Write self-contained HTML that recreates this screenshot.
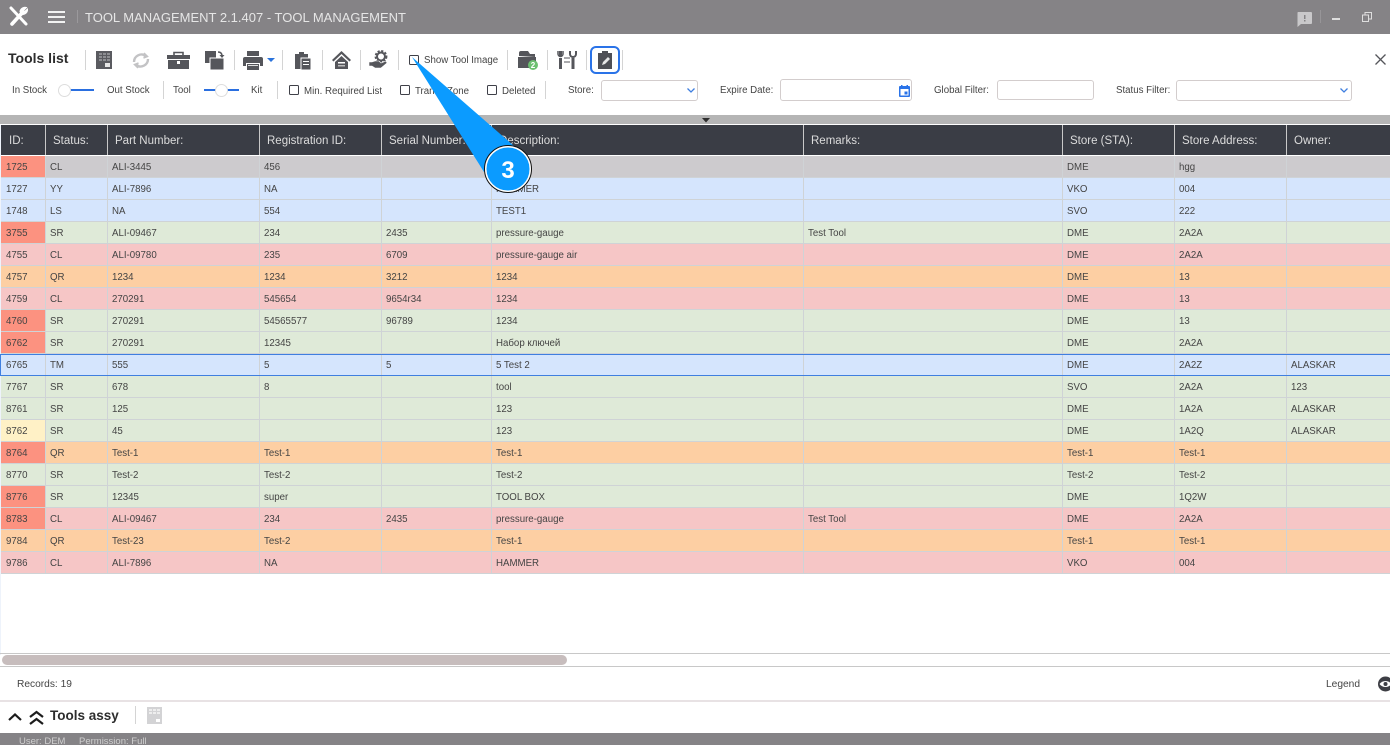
<!DOCTYPE html>
<html><head><meta charset="utf-8"><style>
*{box-sizing:border-box}
html,body{margin:0;padding:0;width:1390px;height:745px;overflow:hidden;background:#fff;font-family:"Liberation Sans","Noto Sans CJK SC",sans-serif;color:#3d3d3d}
.a{position:absolute;white-space:nowrap}
.l{position:absolute;white-space:nowrap;font-size:9.7px;line-height:12px;color:#444}
.sep{position:absolute;width:1px;background:#d4d4d4}
.cb{position:absolute;width:10px;height:10px;border:1px solid #3f4048;border-radius:1.5px;background:#fff}
.inp{position:absolute;background:#fff;border:1px solid #d3cdcd;border-radius:3px}
#hd{position:absolute;left:1px;top:125px;width:1389px;height:30px;background:#3a3d45;display:flex}
#hd div{height:30px;line-height:33px;font-size:11.5px;color:#dcdcdc;padding-left:7px;border-right:1px solid #c9c9c9;white-space:nowrap;overflow:hidden}
.r{position:absolute;left:1px;width:1389px;height:22px;display:flex;font-size:9.7px;line-height:24px;color:#444;border-bottom:1px solid #cfd3d6}
.r span{display:block;height:21px;padding-left:4px;border-right:1px solid #cfd3d6;white-space:nowrap;overflow:hidden}
.r span.c1{padding-left:5px}
.c1{width:45px}.c2{width:62px}.c3{width:152px}.c4{width:122px}.c5{width:110px}.c6{width:312px}.c7{width:259px}.c8{width:112px}.c9{width:112px}.c10{width:103px;border-right:0!important}
.g{background:#cdcbce}.b{background:#d5e5fd}.n{background:#dfead8}.p{background:#f6c6c6}.o{background:#fdcfa3}
.x{background:#fc9280}.y{background:#fff1c6}
.r.sel{border-top:1px solid #3f7fe0;border-bottom:1px solid #3f7fe0;height:22px;line-height:22px;z-index:2;left:0;width:1390px;border-left:1px solid #3f7fe0}
.r.sel span{height:20px}
svg{position:absolute;overflow:visible}
</style></head><body>

<div class="a" style="left:0;top:0;width:1390px;height:34px;background:#858386"></div>
<svg style="left:9px;top:6px" width="20" height="21" viewBox="0 0 20 21" fill="none" stroke="#fff"><path d="M2 2l15 16" stroke-width="3" stroke-linecap="round"/><path d="M3 18L13 7" stroke-width="3.600" stroke-linecap="round"/><path d="M17.500 1.500l-3 3 1 1 3-2.500a5 5 0 0 1-6 5.500l-1.500-3a5 5 0 0 1 6.500-4z" fill="#fff" stroke-width="1"/></svg>
<div class="a" style="left:48px;top:11px;width:17px;height:2px;background:#f2f2f2"></div>
<div class="a" style="left:48px;top:16px;width:17px;height:2px;background:#f2f2f2"></div>
<div class="a" style="left:48px;top:21px;width:17px;height:2px;background:#f2f2f2"></div>
<div class="a" style="left:77px;top:10px;width:1px;height:13px;background:#9b999c"></div>
<div class="a" style="left:85px;top:10px;font-size:13px;line-height:16px;color:#e6e6e6">TOOL MANAGEMENT 2.1.407 - TOOL MANAGEMENT</div>
<svg style="left:1297px;top:12px" width="15" height="15" viewBox="0 0 15 15"><path d="M1 0h13a1 1 0 0 1 1 1v10a1 1 0 0 1-1 1H4l-3.500 3V1a1 1 0 0 1 .5-1z" fill="#c9c8ca"/><rect x="7" y="3" width="1.500" height="4" fill="#858386"/><rect x="7" y="8" width="1.500" height="1.500" fill="#858386"/></svg>
<div class="a" style="left:1320px;top:10px;width:1px;height:13px;background:#979598"></div>
<div class="a" style="left:1332px;top:18px;width:8px;height:2px;background:#dedede"></div>
<svg style="left:1362px;top:12px" width="10" height="10" viewBox="0 0 10 10" fill="none" stroke="#dedede"><rect x=".5" y="3" width="6" height="6.500"/><path d="M3 3V.5h6.500V7H6.500"/></svg>

<div class="a" style="left:8px;top:50px;font-size:14px;line-height:17px;font-weight:bold;color:#2d2d2d">Tools list</div>
<div class="sep" style="left:85px;top:50px;height:20px"></div>
<svg style="left:96px;top:51px" width="17" height="18"><rect width="16" height="18" fill="#5a5b60"/><g fill="#8d8e92"><rect x="3" y="2" width="3" height="2"/><rect x="7" y="2" width="3" height="2"/><rect x="11" y="2" width="3" height="2"/><rect x="3" y="5" width="3" height="2"/><rect x="7" y="5" width="3" height="2"/><rect x="11" y="5" width="3" height="2"/><rect x="3" y="8" width="3" height="2"/><rect x="7" y="8" width="3" height="2"/><rect x="11" y="8" width="3" height="2"/></g><rect x="9" y="12" width="5" height="4" fill="#e6e6e6"/></svg>
<svg style="left:131px;top:51px" width="20" height="19" viewBox="0 0 20 19" fill="none" stroke="#c3c3c5" stroke-width="2.400"><path d="M3 11a7.500 7.500 0 0 1 12-6"/><path d="M17 8a7.500 7.500 0 0 1-12 6"/><path d="M13 2l3.500 3.500-4 1.500" stroke-width="1.500" fill="#c3c3c5"/><path d="M7 17l-3.500-3.500 4-1.500" stroke-width="1.500" fill="#c3c3c5"/></svg>
<svg style="left:167px;top:51px" width="23" height="18"><path d="M7 4V1.500h9V4" fill="none" stroke="#55565b" stroke-width="1.600"/><rect y="4" width="23" height="4" fill="#55565b"/><rect x="1" y="9" width="21" height="9" fill="#55565b"/><rect x="10" y="10" width="3" height="3" fill="#fff"/></svg>
<svg style="left:205px;top:51px" width="19" height="19"><rect width="11" height="12" fill="#55565b"/><rect x="5" y="7" width="14" height="12" fill="#55565b" stroke="#fff"/><path d="M13 1c3 0 4 1.500 4 4" fill="none" stroke="#55565b" stroke-width="1.500"/><path d="M14.500 4h5l-2.500 3z" fill="#55565b"/></svg>
<div class="sep" style="left:234px;top:50px;height:20px"></div>
<svg style="left:243px;top:51px" width="20" height="19"><rect x="4" y="0" width="12" height="5" fill="#55565b"/><path d="M2 6h16a2 2 0 0 1 2 2v7h-3v-3H3v3H0V8a2 2 0 0 1 2-2z" fill="#55565b"/><rect x="4" y="13" width="12" height="6" fill="#55565b"/><rect x="5" y="14" width="10" height="1" fill="#ddd"/></svg>
<svg style="left:267px;top:58px" width="8" height="5"><path d="M0 0h8l-4 4z" fill="#2a73dc"/></svg>
<div class="sep" style="left:282px;top:50px;height:20px"></div>
<svg style="left:294px;top:51px" width="17" height="19"><path d="M1 3h4V1h5v2h4v15H1z" fill="#55565b"/><rect x="7" y="7" width="10" height="12" fill="#55565b" stroke="#fff"/><rect x="9" y="10" width="6" height="1" fill="#fff"/><rect x="9" y="13" width="6" height="1" fill="#fff"/></svg>
<div class="sep" style="left:322px;top:50px;height:20px"></div>
<svg style="left:332px;top:51px" width="19" height="18"><path d="M9.500 0L19 9l-1.500 1.500-8-7.500-8 7.500L0 9z" fill="#55565b"/><path d="M3 11l6.500-6 6.500 6v7H3z" fill="#55565b"/><rect x="6" y="11" width="7" height="1.500" fill="#fff"/><rect x="6" y="14" width="7" height="1.500" fill="#bbb"/></svg>
<div class="sep" style="left:360px;top:50px;height:20px"></div>
<svg style="left:369px;top:50px" width="19" height="19"><circle cx="12" cy="6.500" r="5.500" fill="none" stroke="#55565b" stroke-width="1.800" stroke-dasharray="2.200 1.500"/><circle cx="12" cy="6.500" r="4" fill="none" stroke="#55565b" stroke-width="2"/><path d="M0 12h3l3-1h4l2 2 5-2 1 2-6 5H6l-3-2H0z" fill="#55565b" stroke="#fff" stroke-width=".6"/></svg>
<div class="sep" style="left:398px;top:50px;height:20px"></div>
<div class="cb" style="left:409px;top:55px"></div>
<div class="l" style="left:424px;top:55px">Show Tool Image</div>
<div class="sep" style="left:507px;top:50px;height:20px"></div>
<svg style="left:518px;top:50px" width="22" height="20"><path d="M1 6V3a2 2 0 0 1 2-2h7l2 3h5v3z" fill="#55565b"/><path d="M0 7h18v11H0z" fill="#55565b"/><circle cx="15" cy="15" r="5" fill="#6cc070"/><text x="15" y="18" font-size="8" font-weight="bold" fill="#fff" text-anchor="middle" font-family="Liberation Sans">2</text></svg>
<div class="sep" style="left:547px;top:50px;height:20px"></div>
<svg style="left:557px;top:50px" width="20" height="20" fill="none" stroke="#55565b"><path d="M3.500 1v5M3.500 8v11" stroke-width="3"/><path d="M1 1v3a2.500 2.500 0 0 0 5 0V1" stroke-width="1.500"/><path d="M16 8v11" stroke-width="3"/><path d="M13 1v3a3 3 0 0 0 6 0V1" stroke-width="2"/><path d="M7 8h6M7 12h6" stroke-width="1"/></svg>
<div class="sep" style="left:586px;top:50px;height:20px"></div>
<div class="a" style="left:590px;top:46px;width:30px;height:28px;border:2px solid #2a73e8;border-radius:6px"></div>
<svg style="left:598px;top:51px" width="14" height="18"><path d="M0 2h4V0h6v2h4v16H0z" fill="#4f5056"/><path d="M4 14l1-3 5-5 2 2-5 5z" fill="#e8e8e8"/></svg>
<div class="sep" style="left:622px;top:50px;height:20px"></div>
<svg style="left:1375px;top:54px" width="11" height="11" fill="none" stroke="#55565b" stroke-width="1.300"><path d="M.5.500l10 10M10.500.500l-10 10"/></svg>

<div class="l" style="left:12px;top:85px">In Stock</div>
<div class="a" style="left:64px;top:89px;width:30px;height:2px;background:#2a6fe0"></div>
<div class="a" style="left:58px;top:84px;width:13px;height:13px;border-radius:50%;background:#fff;border:1px solid #ddd"></div>
<div class="l" style="left:107px;top:85px">Out Stock</div>
<div class="sep" style="left:163px;top:81px;height:18px"></div>
<div class="l" style="left:173px;top:85px">Tool</div>
<div class="a" style="left:204px;top:89px;width:35px;height:2px;background:#2a6fe0"></div>
<div class="a" style="left:215px;top:84px;width:13px;height:13px;border-radius:50%;background:#fff;border:1px solid #ddd"></div>
<div class="l" style="left:251px;top:85px">Kit</div>
<div class="sep" style="left:277px;top:81px;height:18px"></div>
<div class="cb" style="left:289px;top:85px"></div>
<div class="l" style="left:304px;top:86px">Min. Required List</div>
<div class="cb" style="left:400px;top:85px"></div>
<div class="l" style="left:415px;top:86px">Transit Zone</div>
<div class="cb" style="left:487px;top:85px"></div>
<div class="l" style="left:502px;top:86px">Deleted</div>
<div class="sep" style="left:545px;top:81px;height:18px"></div>
<div class="l" style="left:568px;top:85px">Store:</div>
<div class="inp" style="left:601px;top:80px;width:97px;height:21px"></div>
<svg style="left:687px;top:88px" width="8" height="6" fill="none" stroke="#3f7fe0" stroke-width="1.300"><path d="M.5.500l3.500 3.500 3.500-3.500"/></svg>
<div class="l" style="left:720px;top:85px">Expire Date:</div>
<div class="inp" style="left:780px;top:79px;width:132px;height:22px"></div>
<svg style="left:899px;top:85px" width="11" height="12"><rect y="1" width="11" height="11" rx="1" fill="#2a73e8"/><rect x="1.500" y="4" width="8" height="6.500" fill="#fff"/><rect x="5.500" y="6.500" width="3" height="3" fill="#2a73e8"/><rect x="2" width="1.500" height="2" fill="#2a73e8"/><rect x="7.500" width="1.500" height="2" fill="#2a73e8"/></svg>
<div class="l" style="left:934px;top:85px">Global Filter:</div>
<div class="inp" style="left:997px;top:80px;width:97px;height:20px"></div>
<div class="l" style="left:1116px;top:85px">Status Filter:</div>
<div class="inp" style="left:1176px;top:80px;width:176px;height:21px"></div>
<svg style="left:1340px;top:88px" width="8" height="6" fill="none" stroke="#3f7fe0" stroke-width="1.300"><path d="M.5.500l3.500 3.500 3.500-3.500"/></svg>

<div class="a" style="left:0;top:115px;width:1390px;height:9px;background:#b5b5b5"></div>
<svg style="left:702px;top:118px" width="8" height="5"><path d="M0 0h8l-4 4.500z" fill="#2d2d2d"/></svg>
<div class="a" style="left:0;top:125px;width:1px;height:530px;background:#eef3fb"></div>

<div id="hd">
<div style="width:45px;padding-left:8px">ID:</div><div style="width:62px">Status:</div><div style="width:152px">Part Number:</div><div style="width:122px">Registration ID:</div><div style="width:110px">Serial Number:</div><div style="width:312px">Description:</div><div style="width:259px">Remarks:</div><div style="width:112px">Store (STA):</div><div style="width:112px">Store Address:</div><div style="width:103px;border:0">Owner:</div>
</div>

<div class="r g" style="top:156px"><span class="c1 x">1725</span><span class="c2">CL</span><span class="c3">ALI-3445</span><span class="c4">456</span><span class="c5"></span><span class="c6"></span><span class="c7"></span><span class="c8">DME</span><span class="c9">hgg</span><span class="c10"></span></div>
<div class="r b" style="top:178px"><span class="c1">1727</span><span class="c2">YY</span><span class="c3">ALI-7896</span><span class="c4">NA</span><span class="c5"></span><span class="c6">HAMMER</span><span class="c7"></span><span class="c8">VKO</span><span class="c9">004</span><span class="c10"></span></div>
<div class="r b" style="top:200px"><span class="c1">1748</span><span class="c2">LS</span><span class="c3">NA</span><span class="c4">554</span><span class="c5"></span><span class="c6">TEST1</span><span class="c7"></span><span class="c8">SVO</span><span class="c9">222</span><span class="c10"></span></div>
<div class="r n" style="top:222px"><span class="c1 x">3755</span><span class="c2">SR</span><span class="c3">ALI-09467</span><span class="c4">234</span><span class="c5">2435</span><span class="c6">pressure-gauge</span><span class="c7">Test Tool</span><span class="c8">DME</span><span class="c9">2A2A</span><span class="c10"></span></div>
<div class="r p" style="top:244px"><span class="c1">4755</span><span class="c2">CL</span><span class="c3">ALI-09780</span><span class="c4">235</span><span class="c5">6709</span><span class="c6">pressure-gauge air</span><span class="c7"></span><span class="c8">DME</span><span class="c9">2A2A</span><span class="c10"></span></div>
<div class="r o" style="top:266px"><span class="c1">4757</span><span class="c2">QR</span><span class="c3">1234</span><span class="c4">1234</span><span class="c5">3212</span><span class="c6">1234</span><span class="c7"></span><span class="c8">DME</span><span class="c9">13</span><span class="c10"></span></div>
<div class="r p" style="top:288px"><span class="c1">4759</span><span class="c2">CL</span><span class="c3">270291</span><span class="c4">545654</span><span class="c5">9654r34</span><span class="c6">1234</span><span class="c7"></span><span class="c8">DME</span><span class="c9">13</span><span class="c10"></span></div>
<div class="r n" style="top:310px"><span class="c1 x">4760</span><span class="c2">SR</span><span class="c3">270291</span><span class="c4">54565577</span><span class="c5">96789</span><span class="c6">1234</span><span class="c7"></span><span class="c8">DME</span><span class="c9">13</span><span class="c10"></span></div>
<div class="r n" style="top:332px"><span class="c1 x">6762</span><span class="c2">SR</span><span class="c3">270291</span><span class="c4">12345</span><span class="c5"></span><span class="c6">Набор ключей</span><span class="c7"></span><span class="c8">DME</span><span class="c9">2A2A</span><span class="c10"></span></div>
<div class="r b sel" style="top:354px"><span class="c1">6765</span><span class="c2">TM</span><span class="c3">555</span><span class="c4">5</span><span class="c5">5</span><span class="c6">5 Test 2</span><span class="c7"></span><span class="c8">DME</span><span class="c9">2A2Z</span><span class="c10">ALASKAR</span></div>
<div class="r n" style="top:376px"><span class="c1">7767</span><span class="c2">SR</span><span class="c3">678</span><span class="c4">8</span><span class="c5"></span><span class="c6">tool</span><span class="c7"></span><span class="c8">SVO</span><span class="c9">2A2A</span><span class="c10">123</span></div>
<div class="r n" style="top:398px"><span class="c1">8761</span><span class="c2">SR</span><span class="c3">125</span><span class="c4"></span><span class="c5"></span><span class="c6">123</span><span class="c7"></span><span class="c8">DME</span><span class="c9">1A2A</span><span class="c10">ALASKAR</span></div>
<div class="r n" style="top:420px"><span class="c1 y">8762</span><span class="c2">SR</span><span class="c3">45</span><span class="c4"></span><span class="c5"></span><span class="c6">123</span><span class="c7"></span><span class="c8">DME</span><span class="c9">1A2Q</span><span class="c10">ALASKAR</span></div>
<div class="r o" style="top:442px"><span class="c1 x">8764</span><span class="c2">QR</span><span class="c3">Test-1</span><span class="c4">Test-1</span><span class="c5"></span><span class="c6">Test-1</span><span class="c7"></span><span class="c8">Test-1</span><span class="c9">Test-1</span><span class="c10"></span></div>
<div class="r n" style="top:464px"><span class="c1">8770</span><span class="c2">SR</span><span class="c3">Test-2</span><span class="c4">Test-2</span><span class="c5"></span><span class="c6">Test-2</span><span class="c7"></span><span class="c8">Test-2</span><span class="c9">Test-2</span><span class="c10"></span></div>
<div class="r n" style="top:486px"><span class="c1 x">8776</span><span class="c2">SR</span><span class="c3">12345</span><span class="c4">super</span><span class="c5"></span><span class="c6">TOOL BOX</span><span class="c7"></span><span class="c8">DME</span><span class="c9">1Q2W</span><span class="c10"></span></div>
<div class="r p" style="top:508px"><span class="c1 x">8783</span><span class="c2">CL</span><span class="c3">ALI-09467</span><span class="c4">234</span><span class="c5">2435</span><span class="c6">pressure-gauge</span><span class="c7">Test Tool</span><span class="c8">DME</span><span class="c9">2A2A</span><span class="c10"></span></div>
<div class="r o" style="top:530px"><span class="c1">9784</span><span class="c2">QR</span><span class="c3">Test-23</span><span class="c4">Test-2</span><span class="c5"></span><span class="c6">Test-1</span><span class="c7"></span><span class="c8">Test-1</span><span class="c9">Test-1</span><span class="c10"></span></div>
<div class="r p" style="top:552px"><span class="c1">9786</span><span class="c2">CL</span><span class="c3">ALI-7896</span><span class="c4">NA</span><span class="c5"></span><span class="c6">HAMMER</span><span class="c7"></span><span class="c8">VKO</span><span class="c9">004</span><span class="c10"></span></div>

<div class="a" style="left:0;top:653px;width:1390px;height:14px;border-top:1px solid #c8c8c8;border-bottom:1px solid #c8c8c8"></div>
<div class="a" style="left:2px;top:655px;width:565px;height:10px;background:#c7bdbd;border-radius:5px"></div>
<div class="l" style="left:17px;top:679px;font-size:10.200px">Records: 19</div>
<div class="l" style="left:1326px;top:679px;font-size:10.200px">Legend</div>
<svg style="left:1378px;top:676px" width="12" height="16"><circle cx="7.500" cy="8" r="7.500" fill="#3d3e44"/><path d="M1.500 8c3-4 9-4 12 0-3 4-9 4-12 0z" fill="#fff"/><circle cx="7.500" cy="8" r="2" fill="#3d3e44"/></svg>
<div class="a" style="left:0;top:700px;width:1390px;height:2px;background:#e8e2e4"></div>
<svg style="left:8px;top:711px" width="36" height="14" fill="none" stroke="#1c1c1c" stroke-width="2.200"><path d="M1 9l6-5.500 6 5.500"/><path d="M22 6l6.500-5 6.500 5M22 13l6.500-5 6.500 5"/></svg>
<div class="a" style="left:50px;top:707px;font-size:13.500px;line-height:17px;font-weight:bold;color:#2d2d2d">Tools assy</div>
<div class="sep" style="left:135px;top:706px;height:18px"></div>
<svg style="left:147px;top:707px" width="15" height="17"><rect width="15" height="17" fill="#d3d3d5"/><g fill="#eee"><rect x="2" y="2" width="3" height="2"/><rect x="6" y="2" width="3" height="2"/><rect x="10" y="2" width="3" height="2"/><rect x="2" y="5" width="3" height="2"/><rect x="6" y="5" width="3" height="2"/><rect x="10" y="5" width="3" height="2"/></g><rect x="9" y="12" width="4" height="3" fill="#fff"/></svg>
<div class="a" style="left:0;top:733px;width:1390px;height:12px;background:#858386"></div>
<div class="a" style="left:19px;top:736px;font-size:9.500px;line-height:12px;color:#cfcfcf">User: DEM</div>
<div class="a" style="left:79px;top:736px;font-size:9.500px;line-height:12px;color:#cfcfcf">Permission: Full</div>

<svg style="left:0;top:0;z-index:3" width="1390" height="745">
<path d="M412 57L514 146 484 172z" fill="#0b9bff"/>
<circle cx="508" cy="169" r="22.500" fill="#0b9bff" stroke="#fff" stroke-width="2"/>
<circle cx="508" cy="169" r="23.500" fill="none" stroke="#111" stroke-width="1"/>
<text x="508" y="178" font-size="24" font-weight="bold" fill="#fff" text-anchor="middle" font-family="Liberation Sans">3</text>
</svg>
</body></html>
